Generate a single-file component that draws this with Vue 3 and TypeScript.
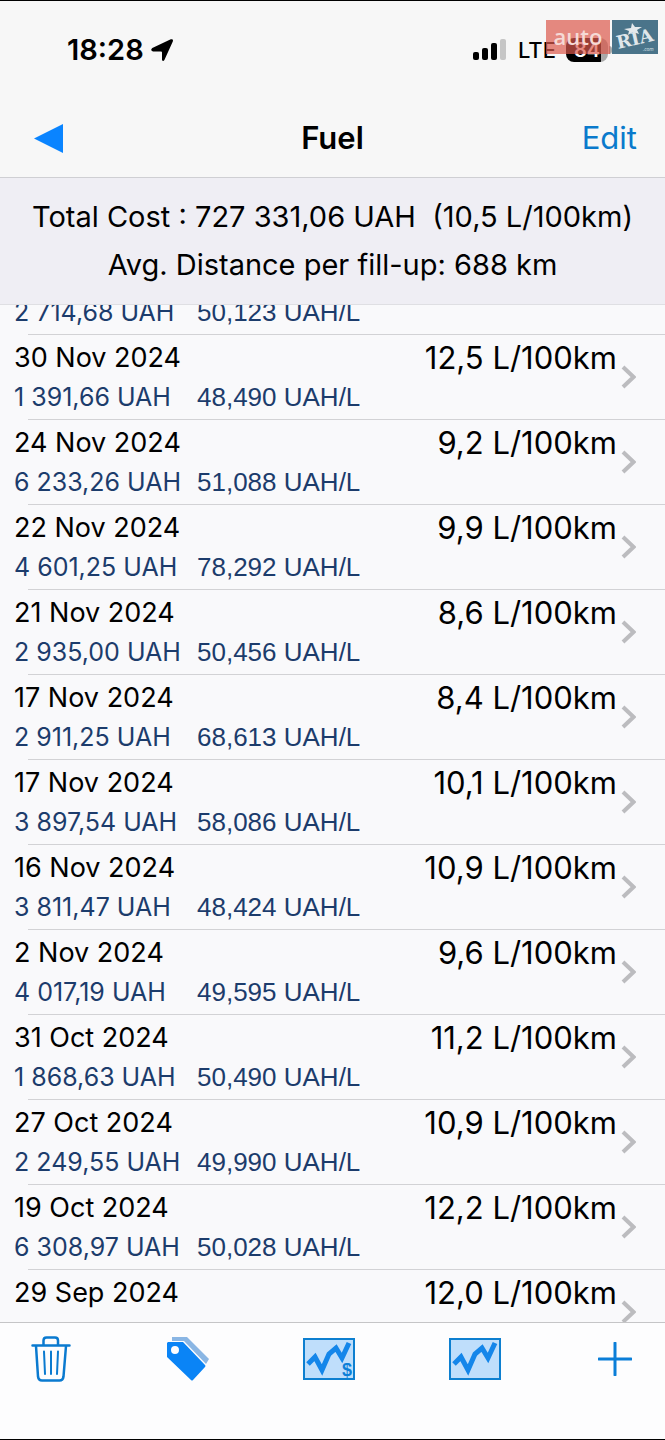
<script setup lang="ts">
interface FillUp {
  date: string
  cost: string
  price: string
  consumption: string
}

const fillUps: FillUp[] = [
  { date: '', cost: '2 714,68 UAH', price: '50,123 UAH/L', consumption: '' },
  { date: '30 Nov 2024', cost: '1 391,66 UAH', price: '48,490 UAH/L', consumption: '12,5 L/100km' },
  { date: '24 Nov 2024', cost: '6 233,26 UAH', price: '51,088 UAH/L', consumption: '9,2 L/100km' },
  { date: '22 Nov 2024', cost: '4 601,25 UAH', price: '78,292 UAH/L', consumption: '9,9 L/100km' },
  { date: '21 Nov 2024', cost: '2 935,00 UAH', price: '50,456 UAH/L', consumption: '8,6 L/100km' },
  { date: '17 Nov 2024', cost: '2 911,25 UAH', price: '68,613 UAH/L', consumption: '8,4 L/100km' },
  { date: '17 Nov 2024', cost: '3 897,54 UAH', price: '58,086 UAH/L', consumption: '10,1 L/100km' },
  { date: '16 Nov 2024', cost: '3 811,47 UAH', price: '48,424 UAH/L', consumption: '10,9 L/100km' },
  { date: '2 Nov 2024', cost: '4 017,19 UAH', price: '49,595 UAH/L', consumption: '9,6 L/100km' },
  { date: '31 Oct 2024', cost: '1 868,63 UAH', price: '50,490 UAH/L', consumption: '11,2 L/100km' },
  { date: '27 Oct 2024', cost: '2 249,55 UAH', price: '49,990 UAH/L', consumption: '10,9 L/100km' },
  { date: '19 Oct 2024', cost: '6 308,97 UAH', price: '50,028 UAH/L', consumption: '12,2 L/100km' },
  { date: '29 Sep 2024', cost: '', price: '', consumption: '12,0 L/100km' },
]
</script>

<template>
  <div class="screen">
    <header class="top">
      <div class="status">
        <div class="status-left">
          <span class="time">18:28</span>
          <svg width="24" height="24" viewBox="0 0 24 24" aria-hidden="true">
            <path d="M2.300 10 20.800 1.300Q23.600 .6 22.800 3.400L14.400 22Q13 24.200 12 22V14.500Q12 13.500 11 13.500H3Q-.2 12.300 2.300 10Z" />
          </svg>
        </div>
        <div class="status-right">
          <svg width="34" height="22" viewBox="0 0 34 22" aria-hidden="true">
            <rect x="0" y="13" width="6" height="8" rx="2" />
            <rect x="9" y="9" width="6" height="12" rx="2" />
            <rect x="18" y="4" width="6" height="17" rx="2" />
            <rect x="27" y="0" width="6" height="21" rx="2" fill="#c6c6c6" />
          </svg>
          <span class="network">LTE</span>
          <span class="battery"><span class="level">84</span></span>
          <span class="nub"></span>
        </div>
        <div class="watermark">
          <span class="auto">auto</span>
          <svg width="46" height="34" viewBox="0 0 46 34">
            <rect width="46" height="34" fill="#4a748a" />
            <path d="M20 3 23 7 30 7 25 10 27 14 21 12 16 15 17 11 12 9 19 8Z" fill="#e4e9ec" />
            <text x="6" y="29" transform="rotate(-13 6 29)" class="ria-name">RIA</text>
            <text x="31" y="31" class="ria-com">.com</text>
          </svg>
        </div>
      </div>
      <nav class="nav">
        <button class="back" type="button" aria-label="Back">
          <svg width="30" height="30" viewBox="0 0 30 30" aria-hidden="true"><path d="M0 15.500 29 1V30Z" /></svg>
        </button>
        <h1>Fuel</h1>
        <button class="edit" type="button">Edit</button>
      </nav>
    </header>

    <section class="summary">
      <p>Total Cost : 727 331,06 UAH&nbsp; (10,5 L/100km)</p>
      <p>Avg. Distance per fill-up: 688 km</p>
    </section>

    <main class="viewport">
      <ul class="list">
        <li v-for="(f, i) in fillUps" :key="i" class="row">
          <div class="line">
            <span class="date">{{ f.date }}</span>
            <span class="consumption">{{ f.consumption }}</span>
          </div>
          <div class="detail">
            <span class="cost">{{ f.cost }}</span>
            <span class="price">{{ f.price }}</span>
          </div>
          <svg v-if="f.consumption" class="chevron" width="15" height="24" viewBox="0 0 15 24" aria-hidden="true">
            <path d="M2 2 12.500 12 2 22" />
          </svg>
        </li>
      </ul>
    </main>

    <footer class="toolbar">
      <button class="trash" type="button" aria-label="Delete">
        <svg width="40" height="46" viewBox="0 0 40 46" fill="none" stroke="#0a7ad0" stroke-width="2.500" stroke-linecap="round" stroke-linejoin="round">
          <path d="M1.500 9.500H38.500M12.500 9V4.500Q12.500 1.500 15.500 1.500H24Q27 1.500 27 4.500V9M5 10 7 40.500Q7.500 44.500 11 44.500H28.500Q32 44.500 32.500 40.500L35 10" />
          <path d="M13 15.500 14 38M20 15.500V38M27 15.500 26 38" stroke-width="2" />
        </svg>
      </button>
      <button type="button" aria-label="Tags">
        <svg width="43" height="44" viewBox="0 0 43 44">
          <path d="M5 0H20L42 22 39 27 17 4H5Z" fill="#8ab6e4" />
          <path fill-rule="evenodd" d="M1 5H16L38 28Q39 29 38 30L26 43Q25 44 24 43L0 20V6ZM8 9A4 4 0 1 0 8 17A4 4 0 1 0 8 9Z" fill="#0a84f6" />
        </svg>
      </button>
      <button type="button" aria-label="Cost chart">
        <svg width="52" height="42" viewBox="0 0 52 42">
          <rect x="1" y="1" width="50" height="40" fill="#bfdefb" stroke="#0d7fd0" stroke-width="2" />
          <path d="M5 26 12 19 19 32 26 16 33 10 39 20 46 5" fill="none" stroke="#1486ea" stroke-width="5" />
          <text x="39" y="38" class="dollar">$</text>
        </svg>
      </button>
      <button type="button" aria-label="Consumption chart">
        <svg width="52" height="42" viewBox="0 0 52 42">
          <rect x="1" y="1" width="50" height="40" fill="#bfdefb" stroke="#0d7fd0" stroke-width="2" />
          <path d="M5 26 12 19 19 32 26 16 33 10 39 20 46 5" fill="none" stroke="#1486ea" stroke-width="5" />
        </svg>
      </button>
      <button class="add" type="button" aria-label="Add">
        <svg width="34" height="34" viewBox="0 0 34 34"><path d="M17 1V33M1 17H33" stroke="#0a7ed8" stroke-width="3" stroke-linecap="round" /></svg>
      </button>
    </footer>
  </div>
</template>

<style>
body {
  margin: 0;
  background: #fff;
}
</style>

<style scoped>
.screen {
  box-sizing: border-box;
  height: 100vh;
  display: flex;
  flex-direction: column;
  border-top: 1px solid #000;
  border-bottom: 1px solid #000;
  background: #f9f9fb;
  color: #000;
  font-family: Inter, "Liberation Sans", sans-serif;
}
button {
  padding: 0;
  border: 0;
  background: none;
  font: inherit;
  color: #0a7acc;
}
svg {
  display: block;
}
.top {
  background: #f7f7f7;
  border-bottom: 1px solid #cfcfd3;
}
.status {
  position: relative;
  height: 98px;
  box-sizing: border-box;
  padding: 34px 53px 34px 67px;
  display: flex;
  justify-content: space-between;
  align-items: center;
}
.status-left,
.status-right {
  display: flex;
  align-items: center;
}
.status-left {
  gap: 6px;
}
.time {
  font-size: 29px;
  line-height: 30px;
  font-weight: 600;
}
.network {
  margin-left: 11px;
  font-size: 22px;
  line-height: 30px;
  font-weight: 500;
}
.battery {
  margin-left: 10px;
  width: 42px;
  height: 24px;
  border-radius: 8px;
  background: linear-gradient(90deg, #000 84%, #a9a9a9 84%);
  color: #fff;
  text-align: center;
}
.nub {
  margin-left: 1px;
  width: 3px;
  height: 8px;
  border-radius: 0 4px 4px 0;
  background: #a9a9a9;
}
.level {
  font-size: 20px;
  line-height: 24px;
  font-weight: 600;
}
.watermark {
  position: absolute;
  top: 19px;
  right: 7px;
  display: flex;
  gap: 2px;
}
.auto {
  width: 64px;
  height: 34px;
  background: rgba(219, 88, 76, 0.7);
  color: #f5dad6;
  text-align: center;
  font: 600 22px/32px "Open Sans", sans-serif;
}
.ria-name {
  font: bold 18px "DejaVu Serif", serif;
  fill: #dfe6ea;
}
.ria-com {
  font: italic 5px "Open Sans", sans-serif;
  fill: #dfe6ea;
}
.nav {
  height: 78px;
  padding: 0 28px;
  display: grid;
  grid-template-columns: 1fr auto 1fr;
  align-items: center;
}
.back {
  justify-self: start;
  margin-left: 6px;
}
.back path {
  fill: #0a84ff;
}
h1 {
  margin: 0;
  font-size: 31px;
  line-height: 36px;
  font-weight: 600;
}
.edit {
  justify-self: end;
  font-size: 31px;
  line-height: 36px;
}
.summary {
  padding: 15px 0;
  border-bottom: 1px solid #dfdfe3;
  background: #efeef4;
  text-align: center;
}
.summary p {
  margin: 0;
  font-size: 29px;
  line-height: 48px;
  white-space: nowrap;
}
.viewport {
  flex: 1;
  min-height: 0;
  overflow: hidden;
}
.list {
  margin: -56px 0 0;
  padding: 0;
  list-style: none;
}
.row {
  position: relative;
  box-sizing: border-box;
  height: 85px;
  padding: 4px 48px 0 14px;
}
.row::before {
  content: "";
  position: absolute;
  top: 0;
  left: 28px;
  right: 0;
  height: 1px;
  background: #d2d2d5;
}
.line {
  display: flex;
  justify-content: space-between;
  height: 40px;
  line-height: 40px;
}
.date {
  font-size: 27px;
}
.consumption {
  font-size: 31px;
}
.detail {
  display: flex;
  font-size: 25px;
  line-height: 38px;
  color: #1c3c6c;
}
.cost {
  width: 183px;
}
.price {
  font-family: "Liberation Sans", Arial, sans-serif;
  font-size: 26px;
}
.chevron {
  position: absolute;
  right: 29px;
  top: 31px;
}
.chevron path {
  fill: none;
  stroke: #bcbcbf;
  stroke-width: 4;
}
.toolbar {
  box-sizing: border-box;
  height: 117px;
  padding: 12px 33px 0 31px;
  border-top: 1px solid #c5c5c7;
  background: #fdfdfe;
  display: flex;
  justify-content: space-between;
  align-items: flex-start;
}
.toolbar button {
  height: 48px;
  display: flex;
  align-items: center;
}
.toolbar .trash {
  width: 42px;
}
.toolbar .add {
  width: 38px;
  justify-content: flex-end;
}
.dollar {
  font: bold 18px "Liberation Sans", sans-serif;
  fill: #0d7fd8;
}
</style>
